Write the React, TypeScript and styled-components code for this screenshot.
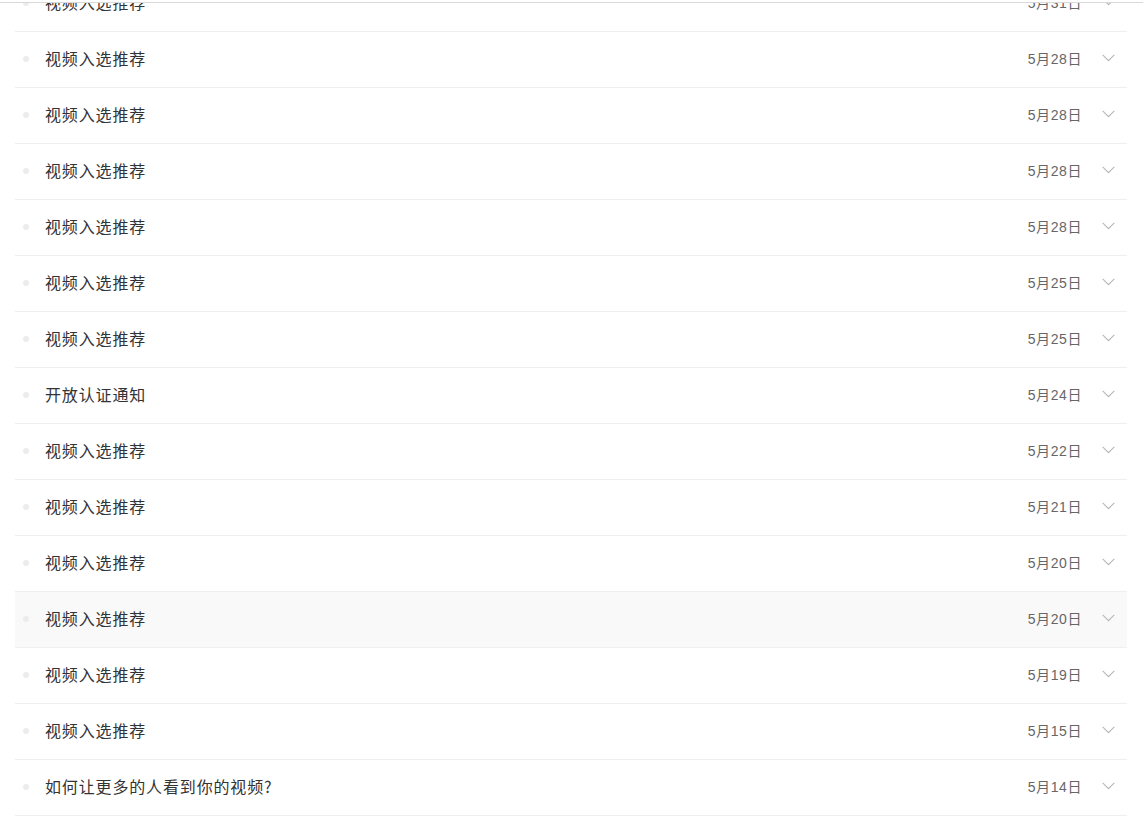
import React from "react";
import styled, { createGlobalStyle } from "styled-components";

const Global = createGlobalStyle`
  html, body { margin: 0; padding: 0; background: #fff; }
  body {
    font-family: "PingFang SC", "Noto Sans CJK SC", "Noto Sans", sans-serif;
    -webkit-font-smoothing: antialiased;
  }
`;

const Page = styled.div`
  height: 823px;
  overflow: hidden;
  position: relative;
`;

const TopEdge = styled.div`
  position: absolute;
  top: 0;
  left: 0;
  right: 0;
  height: 2px;
  background: #fff;
  border-bottom: 1px solid #d9d9d9;
  z-index: 2;
`;

const List = styled.ul`
  list-style: none;
  margin: -24px 16px 0 15px;
  padding: 0;
`;

const Row = styled.li<{ $hover?: boolean }>`
  display: flex;
  align-items: center;
  box-sizing: border-box;
  height: 56px;
  padding-bottom: 3px;
  border-bottom: 1px solid #efefef;
  background: ${(p) => (p.$hover ? "#f9f9f9" : "transparent")};
`;

const Dot = styled.span`
  width: 6px;
  height: 6px;
  border-radius: 50%;
  background: #ececec;
  margin: 2px 16px 0 8px;
  flex: none;
`;

const Title = styled.span`
  flex: 1;
  font-size: 16px;
  color: #333;
  letter-spacing: 0.85px;
`;

const DateText = styled.span`
  font-family: "Liberation Sans", "Noto Sans CJK SC", sans-serif;
  font-size: 14px;
  color: #666;
  letter-spacing: 0.6px;
  margin-right: -1px;
`;

const Chevron = styled.span`
  display: flex;
  align-items: center;
  justify-content: center;
  width: 14px;
  margin: 0 12px 0 20px;
  color: #b8b8b8;
`;

const items: [string, string][] = [
  ["视频入选推荐", "5月31日"],
  ["视频入选推荐", "5月28日"],
  ["视频入选推荐", "5月28日"],
  ["视频入选推荐", "5月28日"],
  ["视频入选推荐", "5月28日"],
  ["视频入选推荐", "5月25日"],
  ["视频入选推荐", "5月25日"],
  ["开放认证通知", "5月24日"],
  ["视频入选推荐", "5月22日"],
  ["视频入选推荐", "5月21日"],
  ["视频入选推荐", "5月20日"],
  ["视频入选推荐", "5月20日"],
  ["视频入选推荐", "5月19日"],
  ["视频入选推荐", "5月15日"],
  ["如何让更多的人看到你的视频?", "5月14日"],
];

export default function App() {
  return (
    <Page>
      <Global />
      <TopEdge />
      <List>
        {items.map(([t, d], i) => (
          <Row key={i} $hover={i === 11}>
            <Dot />
            <Title>{t}</Title>
            <DateText>{d}</DateText>
            <Chevron>
              <svg width="13" height="8" viewBox="0 0 13 8" fill="none">
                <path d="M0.7 0.8 L6.5 6.6 L12.3 0.8" stroke="currentColor" strokeWidth="1.1" />
              </svg>
            </Chevron>
          </Row>
        ))}
      </List>
    </Page>
  );
}
